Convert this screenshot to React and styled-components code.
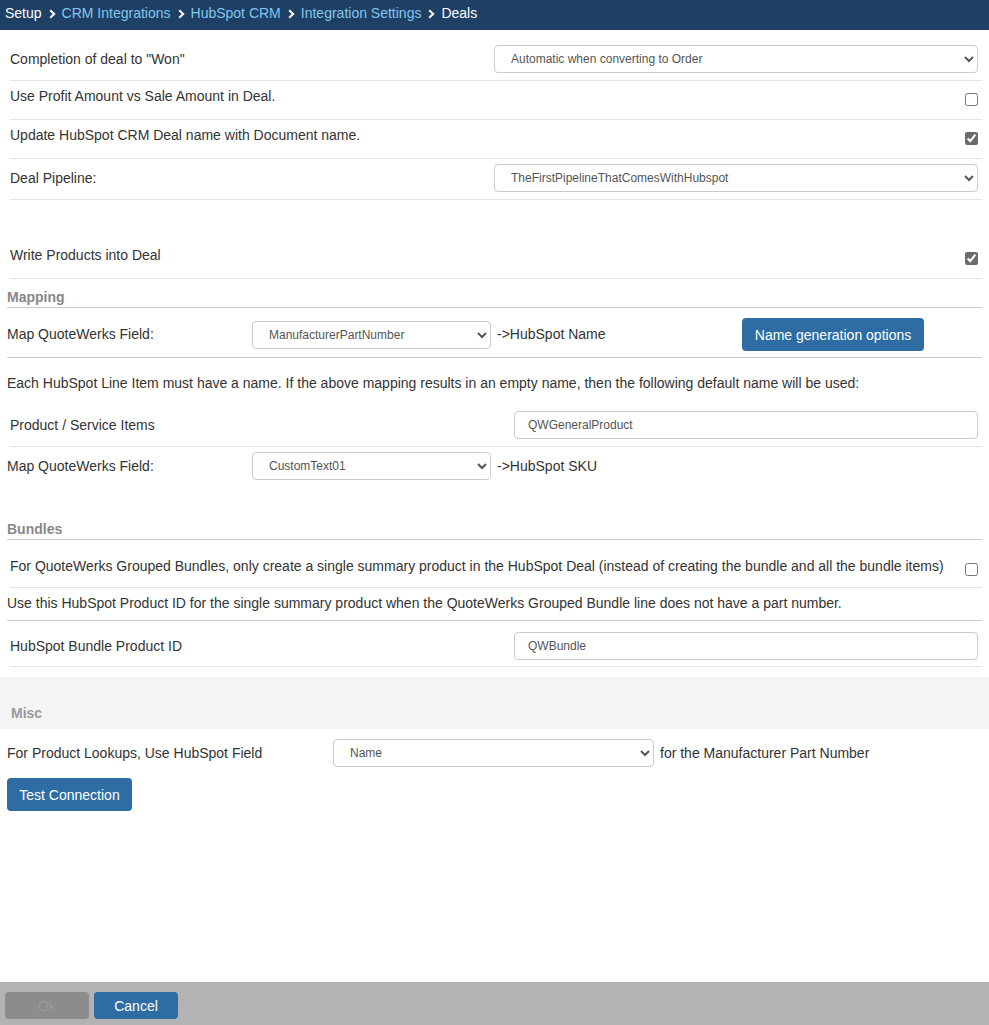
import React from "react";
import styled, { createGlobalStyle } from "styled-components";

const GlobalStyle = createGlobalStyle`
  html, body {
    margin: 0;
    padding: 0;
    background: #fff;
  }
  body {
    font-family: "Liberation Sans", Arial, sans-serif;
    font-size: 14px;
    color: #333;
  }
  * {
    box-sizing: border-box;
  }
`;

const Page = styled.div`
  display: flex;
  flex-direction: column;
  min-height: 100vh;
`;

const Header = styled.div`
  height: 30px;
  background: #1d4064;
  display: flex;
  align-items: center;
  padding: 0 0 4px 5px;
  line-height: 18px;
`;

const Crumb = styled.span`
  color: ${(p) => (p.$link ? "#84c6ef" : "#fff")};
  font-size: 14px;
`;

const Sep = styled.span`
  display: inline-flex;
  margin: 2px 6px 0 7px;
`;

const Content = styled.div`
  padding: 0 7px;
`;

const Row = styled.div`
  display: flex;
  align-items: ${(p) => (p.$top ? "flex-start" : "center")};
  margin-left: ${(p) => (p.$inset ? "3px" : "0")};
  margin-top: ${(p) => p.$mt || "0"};
  padding: ${(p) => p.$pad || "0"};
  border-bottom: ${(p) => (p.$line ? `1px solid ${p.$line}` : "none")};
`;

const Label = styled.div`
  line-height: 17px;
  flex: ${(p) => (p.$w ? "none" : "1")};
  width: ${(p) => p.$w || "auto"};
`;

const Select = styled.select`
  width: ${(p) => p.$w};
  height: 28px;
  margin-right: ${(p) => p.$mr || "0"};
  padding: 0 12px;
  border: 1px solid #ccc;
  border-radius: 4px;
  background: #fff;
  color: #555;
  font-family: "Liberation Sans", Arial, sans-serif;
  font-size: 12px;
`;

const TextInput = styled.input`
  width: 464px;
  height: 28px;
  margin-right: 4px;
  padding: 0 13px;
  border: 1px solid #ccc;
  border-radius: 4px;
  color: #555;
  font-family: "Liberation Sans", Arial, sans-serif;
  font-size: 12px;
`;

const Check = styled.input.attrs({ type: "checkbox" })`
  width: 13px;
  height: 13px;
  margin: ${(p) => p.$mt || "5px"} 4px 0 0;
  accent-color: #6b6b6b;
`;

const Tail = styled.span`
  margin-left: 6px;
  line-height: 17px;
  width: ${(p) => p.$w || "auto"};
`;

const SectionTitle = styled.div`
  margin-top: ${(p) => p.$mt || "0"};
  padding: 10px 0 1px;
  line-height: 17px;
  font-weight: bold;
  color: #888;
  border-bottom: 1px solid #ccc;
`;

const Note = styled.div`
  padding: ${(p) => p.$pad};
  line-height: 17px;
  border-bottom: ${(p) => (p.$line ? "1px solid #ccc" : "none")};
`;

const MiscBand = styled.div`
  margin-top: 10px;
  background: #f4f4f4;
  padding: 28px 11px 7px;
  line-height: 17px;
  font-weight: bold;
  color: #999;
`;

const Button = styled.button`
  height: ${(p) => p.$h || "33px"};
  width: ${(p) => p.$w || "auto"};
  padding: 0 12px;
  border: none;
  border-radius: 4px;
  background: ${(p) => (p.$muted ? "#8c8c8c" : "#2e6da4")};
  color: ${(p) => (p.$muted ? "#999" : "#fff")};
  font-family: "Liberation Sans", Arial, sans-serif;
  font-size: 14px;
`;

const Actions = styled.div`
  padding: 11px 7px 0;
`;

const Footer = styled.div`
  margin-top: auto;
  height: 43px;
  background: #b3b3b3;
  display: flex;
  gap: 5px;
  padding: 10px 5px 0;
`;

const Chevron = () => (
  <svg width="7" height="10" viewBox="0 0 7 10">
    <polyline points="1.2,1.2 5.2,5 1.2,8.8" fill="none" stroke="#fff" strokeWidth="2" />
  </svg>
);

const crumbs = ["CRM Integrations", "HubSpot CRM", "Integration Settings"];

export default function App() {
  return (
    <Page>
      <GlobalStyle />
      <Header>
        <Crumb>Setup</Crumb>
        {crumbs.map((c) => (
          <React.Fragment key={c}>
            <Sep>
              <Chevron />
            </Sep>
            <Crumb $link>{c}</Crumb>
          </React.Fragment>
        ))}
        <Sep>
          <Chevron />
        </Sep>
        <Crumb>Deals</Crumb>
      </Header>

      <Content>
        <Row $inset $pad="15px 0 7px" $line="#e5e5e5">
          <Label>Completion of deal to "Won"</Label>
          <Select $w="484px" $mr="4px" defaultValue="auto">
            <option value="auto">Automatic when converting to Order</option>
          </Select>
        </Row>
        <Row $inset $top $pad="7px 0 13px" $line="#e5e5e5">
          <Label>Use Profit Amount vs Sale Amount in Deal.</Label>
          <Check />
        </Row>
        <Row $inset $top $pad="7px 0 13px" $line="#e5e5e5">
          <Label>Update HubSpot CRM Deal name with Document name.</Label>
          <Check defaultChecked />
        </Row>
        <Row $inset $pad="5px 0 7px" $line="#e5e5e5">
          <Label>Deal Pipeline:</Label>
          <Select $w="484px" $mr="4px" defaultValue="first">
            <option value="first">TheFirstPipelineThatComesWithHubspot</option>
          </Select>
        </Row>

        <Row $inset $top $mt="40px" $pad="7px 0 13px" $line="#e5e5e5">
          <Label>Write Products into Deal</Label>
          <Check defaultChecked />
        </Row>

        <SectionTitle>Mapping</SectionTitle>
        <Row $pad="10px 0 6px" $line="#ccc">
          <Label $w="245px">Map QuoteWerks Field:</Label>
          <Select $w="239px" defaultValue="mpn">
            <option value="mpn">ManufacturerPartNumber</option>
          </Select>
          <Tail $w="245px">-&gt;HubSpot Name</Tail>
          <Button $w="182px">Name generation options</Button>
        </Row>
        <Note $pad="17px 0 13px">
          Each HubSpot Line Item must have a name. If the above mapping results in an empty name, then the
          following default name will be used:
        </Note>
        <Row $inset $pad="6px 0 7px" $line="#e5e5e5">
          <Label>Product / Service Items</Label>
          <TextInput defaultValue="QWGeneralProduct" />
        </Row>
        <Row $pad="5px 0">
          <Label $w="245px">Map QuoteWerks Field:</Label>
          <Select $w="239px" defaultValue="ct1">
            <option value="ct1">CustomText01</option>
          </Select>
          <Tail>-&gt;HubSpot SKU</Tail>
        </Row>

        <SectionTitle $mt="26px">Bundles</SectionTitle>
        <Row $inset $top $pad="18px 0 11px" $line="#e5e5e5">
          <Label>
            For QuoteWerks Grouped Bundles, only create a single summary product in the HubSpot Deal (instead of
            creating the bundle and all the bundle items)
          </Label>
          <Check $mt="5px" />
        </Row>
        <Note $pad="7px 0 8px" $line>
          Use this HubSpot Product ID for the single summary product when the QuoteWerks Grouped Bundle line does
          not have a part number.
        </Note>
        <Row $inset $pad="11px 0 6px" $line="#e5e5e5">
          <Label>HubSpot Bundle Product ID</Label>
          <TextInput defaultValue="QWBundle" />
        </Row>
      </Content>

      <MiscBand>Misc</MiscBand>

      <Content>
        <Row $pad="10px 0 0">
          <Label $w="326px">For Product Lookups, Use HubSpot Field</Label>
          <Select $w="321px" defaultValue="name">
            <option value="name">Name</option>
          </Select>
          <Tail>for the Manufacturer Part Number</Tail>
        </Row>
      </Content>
      <Actions>
        <Button $w="125px">Test Connection</Button>
      </Actions>

      <Footer>
        <Button $muted $w="84px" $h="27px">
          Ok
        </Button>
        <Button $w="84px" $h="27px">
          Cancel
        </Button>
      </Footer>
    </Page>
  );
}
